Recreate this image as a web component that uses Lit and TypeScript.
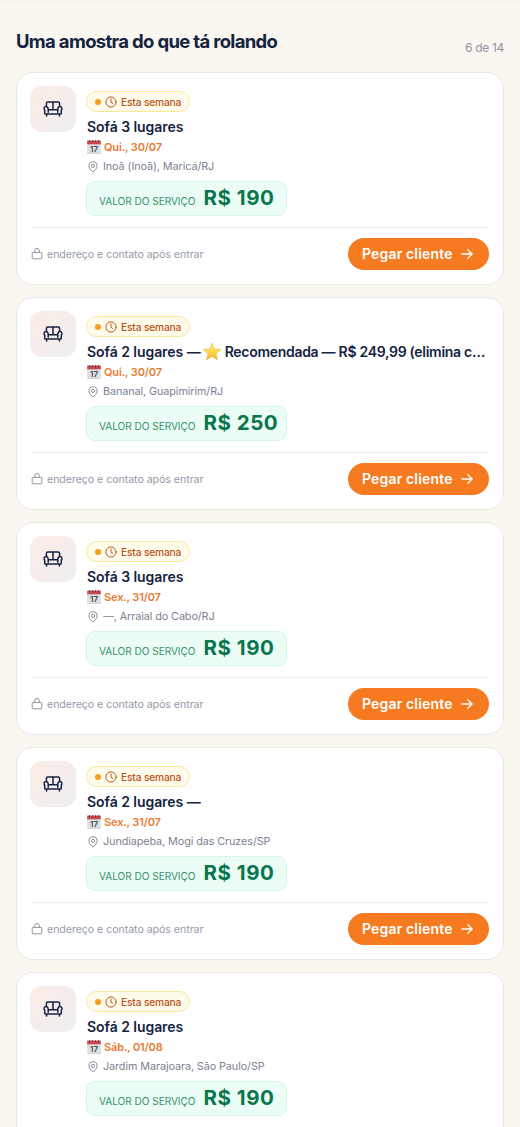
import { LitElement, html, css, svg, nothing } from "lit";
import { customElement, property } from "lit/decorators.js";

interface Job {
  title: string;
  highlight?: string;
  date: string;
  place: string;
  price: string;
  partial?: boolean;
}

const jobs: Job[] = [
  { title: "Sofá 3 lugares", date: "Qui., 30/07", place: "Inoã (Inoã), Maricá/RJ", price: "R$ 190" },
  { title: "Sofá 2 lugares —", highlight: "Recomendada — R$ 249,99 (elimina c…", date: "Qui., 30/07", place: "Bananal, Guapimirim/RJ", price: "R$ 250" },
  { title: "Sofá 3 lugares", date: "Sex., 31/07", place: "—, Arraial do Cabo/RJ", price: "R$ 190" },
  { title: "Sofá 2 lugares —", date: "Sex., 31/07", place: "Jundiapeba, Mogi das Cruzes/SP", price: "R$ 190" },
  { title: "Sofá 2 lugares", date: "Sáb., 01/08", place: "Jardim Marajoara, São Paulo/SP", price: "R$ 190", partial: true },
];

const couch = html`<svg width="22" height="22" viewBox="0 0 22 22" fill="none" stroke="#14233f" stroke-width="1.5" stroke-linejoin="round" stroke-linecap="round">
  <path d="M4.400 8.400V5.600Q4.400 4.100 5.900 4.100h10.200q1.500 0 1.500 1.500v2.800M11 4.100v7.700M6.200 11.800h9.600M6.200 14.200V11Q5.800 8.500 4 8.500C2 8.500 1.500 11 2.700 12v3.200q0 .9.900.9h14.800q.9 0 .9-.9V12c1.200-1 .7-3.500-1.300-3.500Q16.200 8.500 15.800 11v3.200M4.600 16.300v1.600M17.400 16.300v1.600"/>
</svg>`;
const clock = html`<svg width="12" height="12" viewBox="0 0 12 12" fill="none" stroke="#b75a20" stroke-width="1" stroke-linecap="round" stroke-linejoin="round"><circle cx="6" cy="6" r="5.1"/><path d="M6 3v3.2l1.8 1.3"/></svg>`;
const pin = html`<svg width="12" height="12" viewBox="0 0 12 12" fill="none" stroke="#7b8392" stroke-width=".9" stroke-linejoin="round"><path d="M6 11.1C4.600 9.900 1.900 7.500 1.900 4.900a4.100 4.100 0 0 1 8.200 0C10.100 7.500 7.400 9.900 6 11.100Z"/><circle cx="6" cy="4.900" r="1.600"/></svg>`;
const lock = html`<svg width="12" height="12" viewBox="0 0 12 12" fill="none" stroke="#858c99" stroke-width=".9" stroke-linejoin="round"><rect x="1.200" y="4.400" width="9.600" height="6.400" rx=".8"/><path d="M3.700 4.400V2.700a2.300 2.300 0 0 1 4.600 0v1.700"/></svg>`;
const arrow = html`<svg width="14" height="14" viewBox="0 0 14 14" fill="none" stroke="#fff" stroke-width="1.300" stroke-linecap="round" stroke-linejoin="round"><path d="M2 7h10M7.800 2.700 12.100 7l-4.300 4.300"/></svg>`;
const calendar = html`<svg width="14" height="14" viewBox="0 0 14 14"><path fill="#dedfe1" d="M.2 2h13.600v11.600H.2z"/><path fill="#c9cbd0" d="M.2 12.800h13.600v.8H.2z"/><path fill="#c6474c" d="M.2.600h13.600v3.700H.2z"/><path stroke="#743b43" stroke-width="1" d="M2.500.2v1.900M5.500.2v1.900M8.500.2v1.900M11.500.2v1.900"/><text x="7" y="11.600" text-anchor="middle" font-family="Inter,sans-serif" font-size="8" font-weight="600" letter-spacing="0" fill="#454c58">17</text></svg>`;
const star = html`<svg class="star" width="20" height="20" viewBox="0 0 20 20">${svg`<defs><linearGradient id="g" x1="0" y1="0" x2="0" y2="1"><stop stop-color="#ffe787"/><stop offset=".5" stop-color="#ffda4c"/><stop offset="1" stop-color="#eba936"/></linearGradient></defs><path fill="url(#g)" stroke="#efbd49" stroke-width=".6" stroke-linejoin="round" d="m10 1 2.500 6 6.500.5-5 4.200 1.600 6.400L10 14.600l-5.600 3.500L6 11.700 1 7.500 7.500 7Z"/>`}</svg>`;

@customElement("job-card")
class JobCard extends LitElement {
  @property({ attribute: false }) job!: Job;

  static styles = css`
    :host { display: block; box-sizing: border-box; height: 213px; padding: 13px; border: 1px solid #e9e8e6; border-radius: 17px; background: #fff; }
    .summary { display: flex; gap: 10px; height: 141px; }
    .thumb { display: flex; align-items: center; justify-content: center; flex: none; width: 46px; height: 46px; border-radius: 12px; background: linear-gradient(135deg, #fcece5, #eeeef1); }
    .details { display: flex; flex-direction: column; align-items: flex-start; padding-top: 5px; min-width: 0; white-space: nowrap; }
    .badge { display: flex; align-items: center; box-sizing: border-box; width: 104px; height: 21px; padding-left: 8px; border: 1px solid #fce998; border-radius: 11px; background: #fffbeb; color: #b75320; font-size: 10.2px; font-weight: 500; letter-spacing: -.15px; }
    .dot { width: 6px; height: 6px; margin-right: 4px; border-radius: 50%; background: #f59e18; }
    .badge svg { margin-right: 4px; }
    .title { display: flex; align-items: center; height: 19px; margin: 5px 0 1px 1px; color: #14233f; font-size: 14px; font-weight: 600; letter-spacing: -.05px; }
    .star { margin: 0 3px 0 1px; }
    .highlight { letter-spacing: -.29px; }
    .date, .place { display: flex; align-items: center; margin-left: 1px; }
    .date { height: 20px; gap: 3px; color: #e87b35; font-size: 11px; font-weight: 600; letter-spacing: -.15px; }
    .place { height: 19px; gap: 4px; color: #7b8392; font-size: 10.8px; letter-spacing: -.08px; }
    .value { display: flex; align-items: baseline; box-sizing: border-box; width: 201px; height: 35px; margin-top: 5px; padding: 3px 0 0 12px; gap: 8px; border: 1px solid #d2f7e5; border-radius: 9px; background: #ecfdf5; white-space: nowrap; }
    .label { color: #36916f; font-size: 10.1px; letter-spacing: -.04px; }
    .price { color: #08764f; font-size: 20.5px; line-height: 25px; font-weight: 700; letter-spacing: .5px; }
    .footer { display: flex; align-items: center; justify-content: space-between; box-sizing: border-box; height: 43px; margin: 0 2px; padding: 10px 0 0; border-top: 1px solid #ececee; }
    .private { display: flex; align-items: center; gap: 4px; color: #949ba8; font-size: 10.6px; letter-spacing: -.04px; }
    .private svg { margin-left: -1px; }
    .action { display: flex; align-items: center; justify-content: space-between; box-sizing: border-box; width: 141px; height: 32px; margin-right: -1px; padding: 0 15px 1px 14px; border: 0; border-radius: 16px; background: #f67a20; color: #fff; font: 600 14px Inter, sans-serif; letter-spacing: .16px; }
  `;

  render() {
    const j = this.job;
    return html`
      <div class="summary">
        <div class="thumb">${couch}</div>
        <div class="details">
          <div class="badge"><span class="dot"></span>${clock}<span>Esta semana</span></div>
          <div class="title"><span>${j.title}</span>${j.highlight ? html`${star}<span class="highlight">${j.highlight}</span>` : nothing}</div>
          <div class="date">${calendar}<span>${j.date}</span></div>
          <div class="place">${pin}<span>${j.place}</span></div>
          <div class="value"><span class="label">VALOR DO SERVIÇO</span><span class="price">${j.price}</span></div>
        </div>
      </div>
      ${j.partial ? nothing : html`<div class="footer">
        <div class="private">${lock}<span>endereço e contato após entrar</span></div>
        <button class="action"><span>Pegar cliente</span>${arrow}</button>
      </div>`}`;
  }
}

@customElement("app-root")
class AppRoot extends LitElement {
  static styles = css`
    :host { display: block; box-sizing: border-box; height: 1127px; overflow: hidden; background: linear-gradient(#f7f4ed, #faf7f0 5px); font-family: Inter, sans-serif; padding: 27px 16px 0; }
    .heading { display: flex; justify-content: space-between; height: 45px; white-space: nowrap; }
    .name { margin: 0; color: #14233f; font-size: 18.5px; line-height: 28px; font-weight: 700; letter-spacing: -.67px; }
    .count { padding-top: 11px; color: #92949b; font-size: 12px; line-height: 20px; letter-spacing: -.3px; }
    .list { display: flex; flex-direction: column; gap: 12px; }
  `;

  render() {
    return html`
      <header class="heading"><h2 class="name">Uma amostra do que tá rolando</h2><span class="count">6 de 14</span></header>
      <main class="list">${jobs.map((job) => html`<job-card .job=${job}></job-card>`)}</main>`;
  }
}
